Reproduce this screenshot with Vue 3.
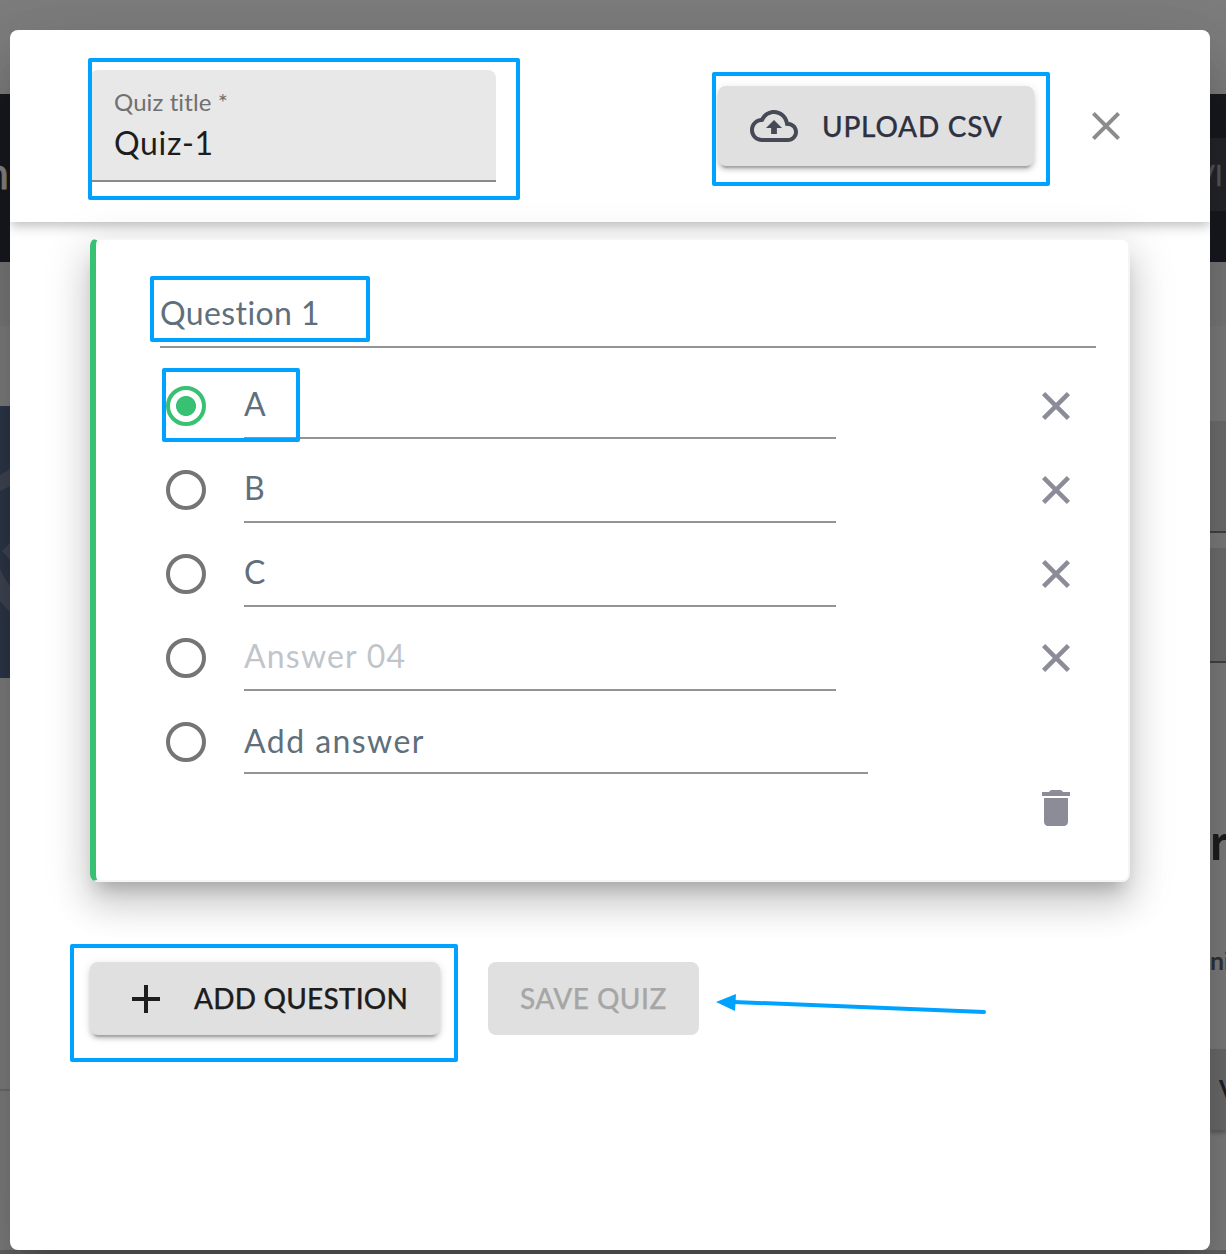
<script setup>
const answers = [
  { text: 'A', checked: true, cls: 'single' },
  { text: 'B', cls: 'single' },
  { text: 'C', cls: 'single' },
  { text: 'Answer 04', cls: 'placeholder' },
]
</script>

<template>
  <div class="page">
    <div class="underlay" aria-hidden="true">
      <div class="top-space"></div>
      <div class="sides">
        <div class="strip left">
          <div class="nav left-nav"><span>m</span></div>
          <div class="band"></div>
          <div class="gap80"></div>
          <div class="thumb">
            <svg width="10" height="272" viewBox="0 0 10 272">
              <path d="M0 69L10 63V80L0 85ZM2 145L10 137V154ZM0 163Q4 172 10 180V206L0 195Z" fill="#3f4552" />
            </svg>
          </div>
          <div class="rest"></div>
          <div class="rule"></div>
          <div class="tail"></div>
        </div>
        <div class="strip right">
          <div class="nav right-nav"><div class="nav-item"><span>VI</span></div></div>
          <div class="band"></div>
          <div class="gap95"></div>
          <div class="field f1"></div>
          <div class="field f2"></div>
          <div class="words">
            <b class="w1">r</b>
            <b class="w2">ni</b>
          </div>
          <div class="side-btn"><b>V</b></div>
        </div>
      </div>
      <div class="footer-line"></div>
    </div>

    <main class="dialog">
      <header class="header">
        <div class="title-field">
          <label class="t-label">Quiz title *</label>
          <div class="t-value">Quiz-1</div>
        </div>
        <button class="btn upload">
          <svg class="cloud" width="48" height="48" viewBox="0 0 24 24">
            <path fill="#464a57" d="M19.35 10.04C18.67 6.59 15.64 4 12 4 9.11 4 6.6 5.64 5.35 8.04 2.34 8.36 0 10.91 0 14c0 3.31 2.69 6 6 6h13c2.76 0 5-2.24 5-5 0-2.64-2.05-4.78-4.65-4.96zM19 18H6c-2.21 0-4-1.79-4-4 0-2.05 1.53-3.76 3.56-3.97l1.07-.11.5-.95C8.08 7.14 9.94 6 12 6c2.62 0 4.88 1.86 5.39 4.43l.3 1.5 1.53.11c1.56.1 2.78 1.41 2.78 2.96 0 1.65-1.35 3-3 3zM8 13h2.55v3h2.9v-3H16l-4-4z" />
          </svg>
          <span>UPLOAD CSV</span>
        </button>
        <svg class="close" width="28" height="28" viewBox="0 0 28 28">
          <path d="M1.4 1.4L26.6 26.6M26.6 1.4L1.4 26.6" stroke="#8c8c8c" stroke-width="4" />
        </svg>
      </header>

      <section class="card">
        <div class="question"><span>Question 1</span></div>
        <div v-for="a in answers" :key="a.text" class="row">
          <span class="radio" :class="{ on: a.checked }"></span>
          <div class="answer"><span :class="a.cls">{{ a.text }}</span></div>
          <svg class="remove" width="28" height="28" viewBox="0 0 28 28">
            <path d="M1.6 1.6L26.4 26.4M26.4 1.6L1.6 26.4" stroke="#8b8c98" stroke-width="4.5" />
          </svg>
        </div>
        <div class="row">
          <span class="radio"></span>
          <div class="answer add"><span>Add answer</span></div>
        </div>
        <div class="card-foot">
          <svg width="48" height="48" viewBox="0 0 24 24">
            <path fill="#8b8c98" d="M6 19c0 1.1.9 2 2 2h8c1.1 0 2-.9 2-2V7H6v12zM19 4h-3.500l-.5-.6q-.4-.4-1-.4h-4q-.6 0-1 .4L8.500 4H5v2h14V4z" />
          </svg>
        </div>
      </section>

      <div class="actions">
        <button class="btn add-q">
          <svg width="28" height="28" viewBox="0 0 28 28"><path d="M14 0V28M0 14H28" stroke="#1d1d1d" stroke-width="4" /></svg>
          <span>ADD QUESTION</span>
        </button>
        <button class="btn save"><span>SAVE QUIZ</span></button>
      </div>
    </main>

    <div class="mark m-title"></div>
    <div class="mark m-upload"></div>
    <div class="mark m-question"></div>
    <div class="mark m-answer"></div>
    <div class="mark m-add"></div>
    <svg class="arrow" width="272" height="22" viewBox="0 0 272 22">
      <path d="M18 10L268 20" stroke="#00a2ff" stroke-width="4" stroke-linecap="round" />
      <path d="M0 10L20 2L19 19Z" fill="#00a2ff" />
    </svg>
  </div>
</template>

<style>
html, body { margin: 0; overflow: hidden; }
</style>

<style scoped>
* { box-sizing: border-box; }
.page {
  position: relative;
  width: 1226px;
  height: 1254px;
  overflow: hidden;
  padding: 30px 16px 4px 10px;
  font-family: Lato, "Noto Sans", sans-serif;
  background: #7d7d7d;
}
svg { display: block; flex: none; }
span, b, label { white-space: nowrap; }

/* page behind the dialog */
.underlay { position: absolute; inset: 0; display: flex; flex-direction: column; }
.top-space { height: 94px; }
.sides { height: 1156px; display: flex; justify-content: space-between; }
.strip { display: flex; flex-direction: column; overflow: hidden; }
.left { width: 10px; }
.right { width: 16px; }
.nav { height: 168px; flex: none; background: #181a20; overflow: hidden; }
.left-nav { display: flex; justify-content: flex-end; align-items: center; color: #858585; font-size: 44px; padding: 0 1px 12px 0; -webkit-text-stroke: .8px currentColor; }
.right-nav { padding-top: 44px; }
.nav-item { height: 73px; background: #24262c; display: flex; align-items: center; justify-content: flex-end; color: #54565a; font-size: 29px; padding-right: 3px; -webkit-text-stroke: .4px currentColor; }
.band { height: 64px; flex: none; background: #797979; }
.gap80 { height: 80px; flex: none; }
.thumb { height: 272px; flex: none; background: #2d3748; }
.rest { height: 411px; flex: none; }
.rule { height: 2px; flex: none; background: #6c6c6c; }
.tail { flex: 1; }
.gap95 { height: 95px; flex: none; }
.field { background: #707070; border-bottom: 2px solid #434343; flex: none; }
.f1 { height: 112px; margin-bottom: 15px; }
.f2 { height: 115px; }
.words { height: 386px; flex: none; color: #1e1e1e; overflow: hidden; }
.w1 { display: block; margin-top: 148px; font-size: 50px; line-height: 60px; letter-spacing: 1px; }
.w2 { display: block; margin-top: 73px; font-size: 25px; line-height: 32px; color: #30343c; }
.side-btn { height: 81px; flex: none; background: #6c6c6c; box-shadow: 0 3px 4px #0004; padding: 25px 0 0 9px; font-size: 24px; color: #202124; }
.footer-line { height: 4px; background: #626262; }

/* dialog */
.dialog {
  position: relative;
  width: 1200px;
  height: 1220px;
  background: #fff;
  border-radius: 8px;
  box-shadow: 0 22px 30px -14px rgba(0,0,0,.2), 0 48px 76px 6px rgba(0,0,0,.12), 0 18px 92px 16px rgba(0,0,0,.08);
}
.header {
  height: 192px;
  display: flex;
  align-items: flex-start;
  padding: 40px 90px 0 80px;
  border-radius: 8px 8px 0 0;
  box-shadow: 0 4px 8px -2px rgba(0,0,0,.14), 0 8px 10px rgba(0,0,0,.07), 0 2px 20px rgba(0,0,0,.08);
  clip-path: inset(0 0 -40px 0);
}
.title-field {
  width: 406px;
  height: 112px;
  background: #e8e8e8;
  border-bottom: 2px solid #8a8a8a;
  border-radius: 8px 8px 0 0;
  padding: 16px 24px 0;
}
.t-label { display: block; font-size: 24px; line-height: 32px; color: #707070; letter-spacing: .1px; }
.t-value { font-size: 32px; line-height: 40px; margin-top: 5px; color: #1d1d1d; letter-spacing: .7px; }
.btn {
  border: 0;
  border-radius: 8px;
  background: #e0e0e0;
  font-family: inherit;
  font-size: 28px;
  font-weight: 500;
  padding: 0;
  display: flex;
  align-items: center;
  box-shadow: 0 6px 2px -4px rgba(0,0,0,.2), 0 4px 4px rgba(0,0,0,.14), 0 2px 10px rgba(0,0,0,.12);
}
.upload { width: 316px; height: 80px; margin: 16px 0 0 222px; padding-left: 32px; gap: 24px; color: #2d3142; letter-spacing: .75px; }
.btn span { -webkit-text-stroke: .25px currentColor; }
.close { margin: 42px 0 0 58px; }
.card {
  width: 1040px;
  height: 644px;
  margin: 16px 0 0 80px;
  border: 2px solid #f5f5f5;
  border-left: 6px solid #38c172;
  border-radius: 8px;
  background: #fff;
  position: relative;
  box-shadow: 0 14px 16px -8px rgba(0,0,0,.2), 0 24px 34px 2px rgba(0,0,0,.12), 0 10px 44px 8px rgba(0,0,0,.1);
  padding-left: 64px;
  color: #606f7b;
  font-size: 32px;
}
.question { width: 936px; height: 108px; margin-bottom: 16px; border-bottom: 2px solid #949494; padding-top: 53px; line-height: 40px; letter-spacing: .4px; }
.row { height: 84px; width: 936px; display: flex; align-items: flex-start; padding-left: 6px; }
.radio { width: 40px; height: 40px; margin-top: 22px; border: 4px solid #757575; border-radius: 50%; flex: none; }
.radio.on { border-color: #38c172; background: radial-gradient(circle, #38c172 9.6px, transparent 10.4px); }
.answer { width: 592px; height: 75px; margin-left: 38px; border-bottom: 2px solid #949494; padding-top: 20px; line-height: 40px; letter-spacing: 1.2px; }
.answer.add { width: 624px; height: 74px; padding-top: 21px; letter-spacing: 1.45px; }
.placeholder { color: #bfc5ca; }
.remove { margin: 28px 0 0 206px; }
.card-foot { display: flex; justify-content: flex-end; padding-right: 48px; }
.actions { display: flex; gap: 48px; margin: 80px 0 0 80px; }
.actions .btn { height: 73px; }
.actions span { position: relative; top: -.5px; }
.add-q { width: 350px; padding-left: 42px; gap: 34px; color: #1d1d1d; letter-spacing: .2px; }
.save { width: 211px; padding-left: 32px; color: #a6a6a6; box-shadow: none; letter-spacing: .45px; }

/* annotations drawn over the dialog */
.mark { position: absolute; border: 4px solid #00a2ff; border-radius: 2px; }
.m-title { left: 88px; top: 58px; width: 432px; height: 142px; }
.m-upload { left: 712px; top: 72px; width: 338px; height: 114px; }
.m-question { left: 150px; top: 276px; width: 220px; height: 66px; }
.m-answer { left: 162px; top: 368px; width: 138px; height: 74px; }
.m-add { left: 70px; top: 944px; width: 388px; height: 118px; }
.arrow { position: absolute; left: 716px; top: 992px; }
</style>
